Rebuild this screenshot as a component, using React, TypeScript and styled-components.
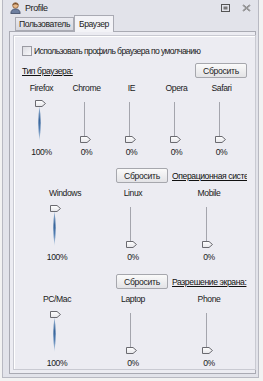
import React from "react";
import styled, { createGlobalStyle } from "styled-components";

const GlobalStyle = createGlobalStyle`
  html, body {
    margin: 0;
    padding: 0;
    background: #f2f2f2;
  }
  body {
    font-family: "Liberation Sans", Arial, sans-serif;
    font-size: 8.6px;
    letter-spacing: -0.4px;
    color: #1a1a1a;
  }
`;

type SliderItem = { label: string; value: number; shift?: number };

const browsers: SliderItem[] = [
  { label: "Firefox", value: 100 },
  { label: "Chrome", value: 0 },
  { label: "IE", value: 0 },
  { label: "Opera", value: 0 },
  { label: "Safari", value: 0 },
];

const systems: SliderItem[] = [
  { label: "Windows", value: 100, shift: 8 },
  { label: "Linux", value: 0 },
  { label: "Mobile", value: 0 },
];

const screens: SliderItem[] = [
  { label: "PC/Mac", value: 100 },
  { label: "Laptop", value: 0 },
  { label: "Phone", value: 0 },
];

const UserIcon = () => (
  <svg width="11" height="12" viewBox="0 0 11 12">
    <circle cx="5.5" cy="3.5" r="2.8" fill="#e8b98a" stroke="#8a5a30" strokeWidth="0.8" />
    <path d="M2.6 2.6 Q5.5 -0.4 8.4 2.6 L8.4 3 Q5.5 1.6 2.6 3 Z" fill="#6b4423" />
    <path d="M0.8 11.5 Q1 7 5.5 7 Q10 7 10.2 11.5 Z" fill="#6e7fa0" stroke="#3d4a66" strokeWidth="0.8" />
  </svg>
);

const RestoreIcon = () => (
  <svg width="9" height="8" viewBox="0 0 9 8">
    <rect x="0.5" y="0.5" width="8" height="7" fill="none" stroke="#555" />
    <rect x="2.5" y="2.5" width="4" height="3" fill="#777" />
  </svg>
);

const CloseIcon = () => (
  <svg width="9" height="8" viewBox="0 0 9 8">
    <path d="M1 1 L8 7 M8 1 L1 7" stroke="#666" strokeWidth="1.6" />
    <path d="M1 1 L8 7 M8 1 L1 7" stroke="#ddd" strokeWidth="0.5" />
  </svg>
);

const Thumb = () => (
  <svg width="11" height="7" viewBox="0 0 11 7">
    <defs>
      <linearGradient id="thumbFill" x1="0" y1="0" x2="0" y2="1">
        <stop offset="0" stopColor="#ffffff" />
        <stop offset="1" stopColor="#e6e6ea" />
      </linearGradient>
    </defs>
    <path d="M0.5 0.5 H7 L10.5 3.5 L7 6.5 H0.5 Z" fill="url(#thumbFill)" stroke="#6a6a70" />
  </svg>
);

const ActiveTrack = ({ height }: { height: number }) => (
  <svg width="7" height={height} viewBox={`0 0 7 ${height}`}>
    <defs>
      <linearGradient id="trackGlow" x1="0" y1="0" x2="0" y2="1">
        <stop offset="0" stopColor="#a9c2de" />
        <stop offset="0.4" stopColor="#35639a" />
        <stop offset="0.65" stopColor="#4f7cb1" />
        <stop offset="1" stopColor="#d3deeb" />
      </linearGradient>
    </defs>
    <path
      d={`M3.5 0 Q5.8 ${height * 0.45} 3.5 ${height} Q1.2 ${height * 0.45} 3.5 0 Z`}
      fill="url(#trackGlow)"
    />
  </svg>
);

const Slider = ({ value }: { value: number }) => {
  const active = value > 0;
  return (
    <SliderBox>
      {active ? (
        <>
          <ThumbWrap>
            <Thumb />
          </ThumbWrap>
          <GlowWrap>
            <ActiveTrack height={35} />
          </GlowWrap>
        </>
      ) : (
        <>
          <TrackLine />
          <ThumbWrap $bottom>
            <Thumb />
          </ThumbWrap>
        </>
      )}
    </SliderBox>
  );
};

const SliderGroup = ({ items, colWidth }: { items: SliderItem[]; colWidth: number }) => (
  <SliderGrid $cols={items.length} $colWidth={colWidth}>
    {items.map((item) => (
      <SliderColumn key={item.label}>
        <SliderLabel $shift={item.shift ?? 0}>{item.label}</SliderLabel>
        <Slider value={item.value} />
        <Percent>{item.value}%</Percent>
      </SliderColumn>
    ))}
  </SliderGrid>
);

const App = () => {
  return (
    <>
      <GlobalStyle />
      <Window>
        <TitleBar>
          <UserIcon />
          <TitleText>Profile</TitleText>
          <TitleButtons>
            <RestoreIcon />
            <CloseIcon />
          </TitleButtons>
        </TitleBar>
        <Tabs>
          <Tab>Пользователь</Tab>
          <Tab $active>Браузер</Tab>
        </Tabs>
        <TabPane>
          <GroupBox>
            <CheckRow>
              <CheckBox />
              <span>Использовать профиль браузера по умолчанию</span>
            </CheckRow>

            <HeaderRow $split>
              <SectionLink>Тип браузера:</SectionLink>
              <ResetButton>Сбросить</ResetButton>
            </HeaderRow>
            <SliderGroup items={browsers} colWidth={45} />

            <HeaderRow $gap={10}>
              <ResetButton>Сбросить</ResetButton>
              <ClippedLink>Операционная система:</ClippedLink>
            </HeaderRow>
            <SliderGroup items={systems} colWidth={76} />

            <HeaderRow $gap={11}>
              <ResetButton>Сбросить</ResetButton>
              <ClippedLink>Разрешение экрана:</ClippedLink>
            </HeaderRow>
            <SliderGroup items={screens} colWidth={76} />
          </GroupBox>
        </TabPane>
      </Window>
    </>
  );
};

const Window = styled.div`
  box-sizing: border-box;
  width: 257px;
  height: 378px;
  margin-left: 2px;
  background: #e2e3ea;
  border: 1px solid #b8b9c2;
  border-top: none;
  display: flex;
  flex-direction: column;
`;

const TitleBar = styled.div`
  height: 17px;
  display: flex;
  align-items: center;
  padding: 0 7px 0 7px;
  gap: 4px;
`;

const TitleText = styled.span`
  font-size: 9px;
  color: #222;
  flex: 1;
`;

const TitleButtons = styled.div`
  display: flex;
  align-items: center;
  gap: 12px;
`;

const Tabs = styled.div`
  display: flex;
  align-items: flex-end;
  height: 16px;
  padding-left: 12px;
`;

const Tab = styled.div<{ $active?: boolean }>`
  box-sizing: border-box;
  height: ${(p) => (p.$active ? "17px" : "14px")};
  padding: 0 ${(p) => (p.$active ? "4px" : "3px")};
  display: flex;
  align-items: center;
  border: 1px solid #a9aab3;
  border-bottom: ${(p) => (p.$active ? "none" : "1px solid #a9aab3")};
  background: ${(p) =>
    p.$active ? "#f3f3f7" : "linear-gradient(#e9e9ef, #d6d7df)"};
  margin-bottom: ${(p) => (p.$active ? "-1px" : "0")};
  position: relative;
  z-index: ${(p) => (p.$active ? 1 : 0)};
  color: #222;
`;

const TabPane = styled.div`
  box-sizing: border-box;
  margin: 0 2px 3px 6px;
  flex: 1;
  border: 1px solid #a9aab3;
  background: #ececf2;
  padding: 3px;
  display: flex;
`;

const GroupBox = styled.div`
  flex: 1;
  border: 1px solid #c9cad2;
  box-shadow: inset 1px 1px 0 #ffffff;
  background: #ececf2;
  padding: 9px 8px 0 4px;
`;

const CheckRow = styled.div`
  display: flex;
  align-items: center;
  gap: 2px;
  padding-left: 4px;
  height: 11px;
  letter-spacing: -0.6px;
`;

const CheckBox = styled.span`
  box-sizing: border-box;
  width: 10px;
  height: 10px;
  border: 1px solid #9a9aa2;
  background: linear-gradient(135deg, #dcdce2, #f7f7f9);
`;

const HeaderRow = styled.div<{ $split?: boolean; $gap?: number }>`
  display: flex;
  align-items: center;
  justify-content: ${(p) => (p.$split ? "space-between" : "flex-end")};
  gap: 4px;
  margin-top: ${(p) => p.$gap ?? 7}px;
  padding-left: ${(p) => (p.$split ? "4px" : "0")};
  height: 15px;
`;

const SectionLink = styled.span`
  text-decoration: underline;
  color: #111;
`;

const ClippedLink = styled.span`
  display: block;
  width: 75px;
  overflow: hidden;
  white-space: nowrap;
  text-decoration: underline;
  color: #111;
`;

const ResetButton = styled.button`
  box-sizing: border-box;
  height: 15px;
  width: 52px;
  padding: 0;
  font-family: inherit;
  font-size: 8.6px;
  letter-spacing: -0.3px;
  color: #222;
  border: 1px solid #a6a7ad;
  border-radius: 2px;
  background: linear-gradient(#fafafa, #e3e3e6);
`;

const SliderGrid = styled.div<{ $cols: number; $colWidth: number }>`
  display: grid;
  grid-template-columns: repeat(${(p) => p.$cols}, ${(p) => p.$colWidth}px);
  margin-top: 2px;
  padding-left: 1px;
`;

const SliderColumn = styled.div`
  display: flex;
  flex-direction: column;
  align-items: center;
`;

const SliderLabel = styled.span<{ $shift: number }>`
  line-height: 11px;
  height: 11px;
  margin-top: 3px;
  transform: translateX(${(p) => p.$shift}px);
`;

const SliderBox = styled.div`
  position: relative;
  width: 14px;
  height: 43px;
  margin-top: 6px;
`;

const TrackLine = styled.div`
  position: absolute;
  left: 4px;
  top: 2px;
  bottom: 3px;
  width: 1px;
  background: #a4a5ad;
`;

const ThumbWrap = styled.div<{ $bottom?: boolean }>`
  position: absolute;
  left: 0;
  ${(p) => (p.$bottom ? "bottom: 0;" : "top: 0;")}
  height: 7px;
  z-index: 1;
  line-height: 0;
`;

const GlowWrap = styled.div`
  position: absolute;
  left: 1px;
  top: 6px;
  line-height: 0;
`;

const Percent = styled.span`
  line-height: 11px;
  margin-top: 4px;
`;

export default App;
